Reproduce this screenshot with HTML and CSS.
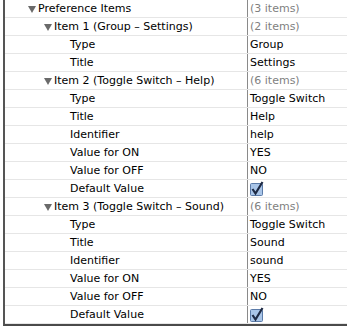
FILE: index.html
```html
<!DOCTYPE html>
<html lang="en">
<head>
    <meta charset="UTF-8">
    <title>Root.plist - Preference Items</title>
    <link rel="stylesheet" href="styles.css">
</head>
<body>
    <div class="outline">
        <div class="row">
            <div class="key lvl0"><span class="disclosure"></span>Preference Items</div>
            <div class="value muted">(3 items)</div>
        </div>
        <div class="row">
            <div class="key lvl1"><span class="disclosure"></span>Item 1 (Group – Settings)</div>
            <div class="value muted">(2 items)</div>
        </div>
        <div class="row">
            <div class="key lvl2">Type</div>
            <div class="value">Group</div>
        </div>
        <div class="row">
            <div class="key lvl2">Title</div>
            <div class="value">Settings</div>
        </div>

        <div class="row">
            <div class="key lvl1"><span class="disclosure"></span>Item 2 (Toggle Switch – Help)</div>
            <div class="value muted">(6 items)</div>
        </div>
        <div class="row">
            <div class="key lvl2">Type</div>
            <div class="value">Toggle Switch</div>
        </div>
        <div class="row">
            <div class="key lvl2">Title</div>
            <div class="value">Help</div>
        </div>
        <div class="row">
            <div class="key lvl2">Identifier</div>
            <div class="value">help</div>
        </div>
        <div class="row">
            <div class="key lvl2">Value for ON</div>
            <div class="value">YES</div>
        </div>
        <div class="row">
            <div class="key lvl2">Value for OFF</div>
            <div class="value">NO</div>
        </div>
        <div class="row">
            <div class="key lvl2">Default Value</div>
            <div class="value">
                <svg class="check" width="14" height="15" viewBox="0 0 14 15">
                    <rect x="0.5" y="2.5" width="12" height="12" rx="1" fill="#a9c5e8" stroke="#5b7ba8"/>
                    <path d="M2.5 8 L5.5 12.5 L12.5 1" fill="none" stroke="#1e2a44" stroke-width="2.2"/>
                </svg>
            </div>
        </div>

        <div class="row">
            <div class="key lvl1"><span class="disclosure"></span>Item 3 (Toggle Switch – Sound)</div>
            <div class="value muted">(6 items)</div>
        </div>
        <div class="row">
            <div class="key lvl2">Type</div>
            <div class="value">Toggle Switch</div>
        </div>
        <div class="row">
            <div class="key lvl2">Title</div>
            <div class="value">Sound</div>
        </div>
        <div class="row">
            <div class="key lvl2">Identifier</div>
            <div class="value">sound</div>
        </div>
        <div class="row">
            <div class="key lvl2">Value for ON</div>
            <div class="value">YES</div>
        </div>
        <div class="row">
            <div class="key lvl2">Value for OFF</div>
            <div class="value">NO</div>
        </div>
        <div class="row">
            <div class="key lvl2">Default Value</div>
            <div class="value">
                <svg class="check" width="14" height="15" viewBox="0 0 14 15">
                    <rect x="0.5" y="2.5" width="12" height="12" rx="1" fill="#a9c5e8" stroke="#5b7ba8"/>
                    <path d="M2.5 8 L5.5 12.5 L12.5 1" fill="none" stroke="#1e2a44" stroke-width="2.2"/>
                </svg>
            </div>
        </div>
    </div>
</body>
</html>
```

FILE: styles.css
```css
body {
    margin: 0;
    background-color: #fff;
    font-family: 'DejaVu Sans', 'Liberation Sans', sans-serif;
    font-size: 11px;
    color: #000;
}

.outline {
    margin-left: 3px;
    border-left: 2px solid #555;
    border-bottom: 2px solid #4a4a4a;
}

.row {
    display: grid;
    grid-template-columns: 243px 1fr;
    height: 18px;
    box-sizing: border-box;
    border-bottom: 1px solid #e6e6e6;
    line-height: 17px;
}

.key {
    border-right: 1px solid #8a8a8a;
    white-space: nowrap;
    overflow: hidden;
}

.value {
    padding-left: 2px;
    white-space: nowrap;
    overflow: hidden;
}

.muted {
    color: #7f7f7f;
}

.lvl0 {
    padding-left: 33px;
}

.lvl1 {
    padding-left: 49px;
}

.lvl2 {
    padding-left: 65px;
}

.disclosure {
    display: inline-block;
    width: 0;
    height: 0;
    margin-left: -10px;
    margin-right: 2px;
    border-left: 4px solid transparent;
    border-right: 4px solid transparent;
    border-top: 7px solid #6a6a6a;
    vertical-align: -1px;
}

.check {
    display: block;
    margin-top: 1px;
}
```
